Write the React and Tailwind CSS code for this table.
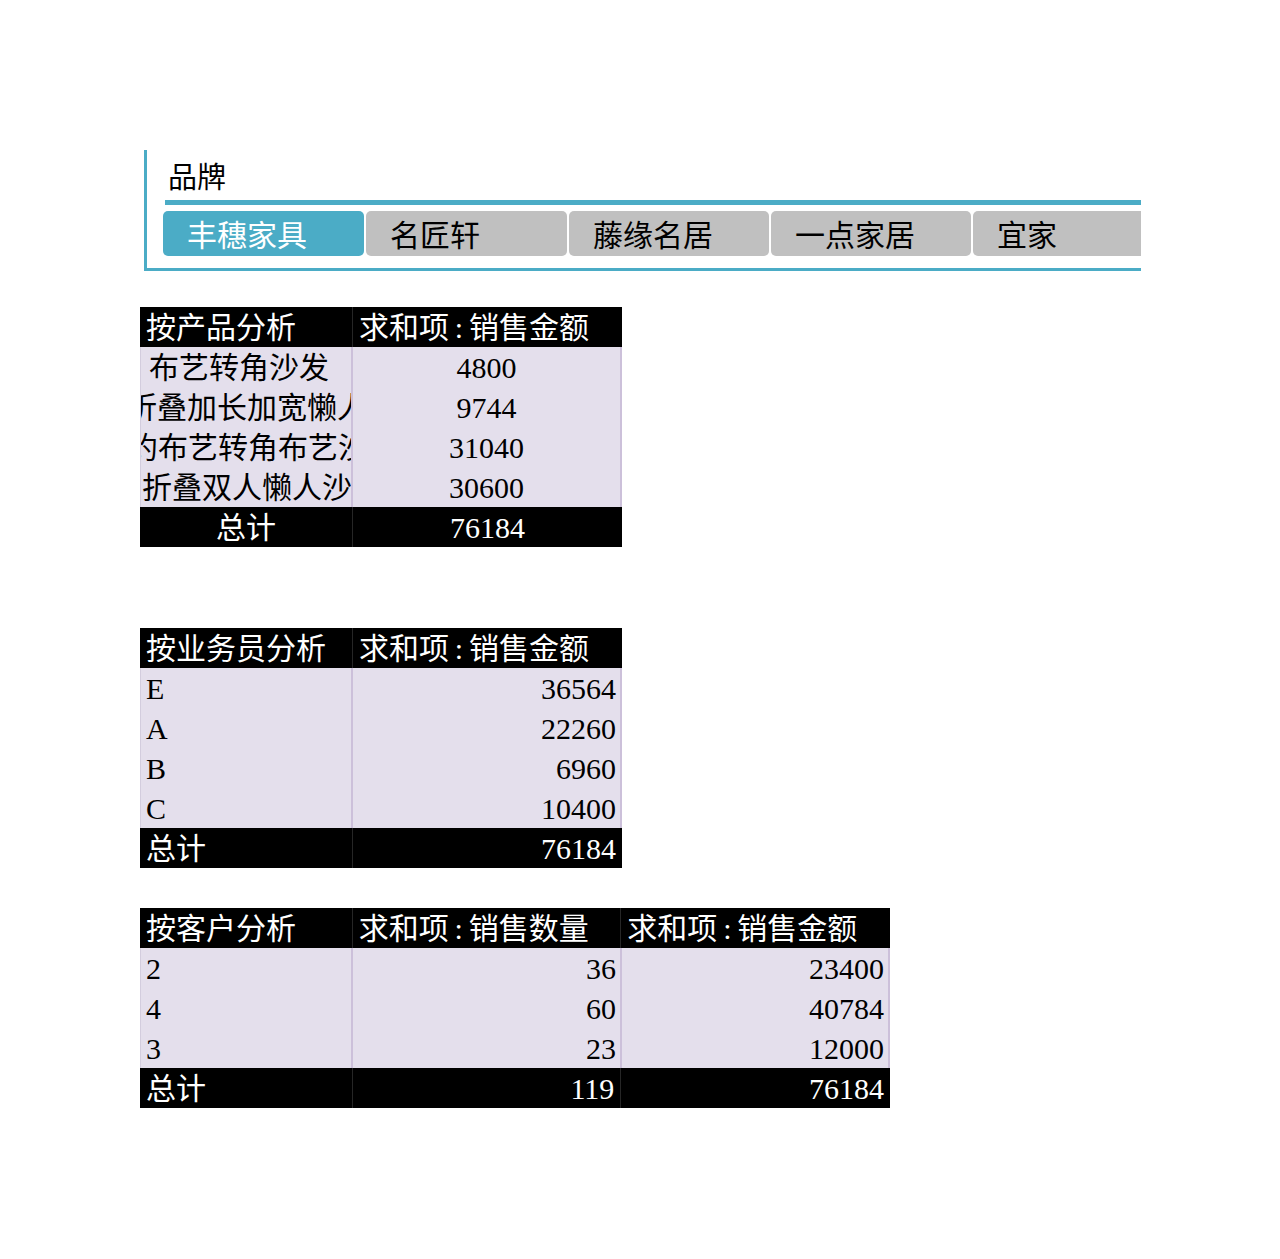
import React from 'react';

const font = { fontFamily: "'Liberation Serif', 'Noto Sans CJK SC', serif" };

const brands = [
    { name: '丰穗家具', active: true, w: 'w-[201px]' },
    { name: '名匠轩', active: false, w: 'w-[201px]' },
    { name: '藤缘名居', active: false, w: 'w-[200px]' },
    { name: '一点家居', active: false, w: 'w-[200px]' },
    { name: '宜家', active: false, w: 'w-[201px]' },
];

const products = [
    { name: '布艺转角沙发', shift: 'ml-[8px]', value: 4800 },
    { name: '折叠加长加宽懒人沙发', shift: 'ml-[-14px]', value: 9744 },
    { name: '简约布艺转角布艺沙发', shift: 'ml-[-43px]', value: 31040 },
    { name: '折叠双人懒人沙发', shift: 'ml-[1px]', value: 30600 },
];

const sellers = [
    { name: 'E', value: 36564 },
    { name: 'A', value: 22260 },
    { name: 'B', value: 6960 },
    { name: 'C', value: 10400 },
];

const customers = [
    { name: '2', qty: 36, value: 23400 },
    { name: '4', qty: 60, value: 40784 },
    { name: '3', qty: 23, value: 12000 },
];

// 求和项:xxx — the colon is wider in the sheet's font
const SumLabel = ({ field }) => (
    <>
        求和项<span className="inline-block w-[20px] text-center">:</span>{field}
    </>
);

const Slicer = () => (
    <div className="ml-[4px] w-[997px] h-[121px] border-l-[3px] border-b-[3px] border-[#4bacc6] flex flex-col">
        <div className="mt-[13px] ml-[21px] h-[30px] leading-[30px] text-[29px] text-black">品牌</div>
        <div className="mt-[7px] ml-[18px] h-[5px] bg-[#4bacc6]" />
        <div className="mt-[6px] ml-[16px] flex gap-[2px] overflow-hidden">
            {brands.map((b) => (
                <div
                    key={b.name}
                    className={`${b.w} shrink-0 h-[45px] rounded-[5px] pl-[24px] pt-[4px] flex items-center text-[30px] whitespace-nowrap ${b.active ? 'bg-[#4bacc6] text-white' : 'bg-[#c0c0c0] text-black'}`}
                >
                    {b.name}
                </div>
            ))}
        </div>
    </div>
);

const HeaderRow = ({ cells }) => (
    <div className="flex h-[40px] bg-black text-white text-[30px] leading-[42px]">
        {cells.map((c, i) => (
            <div
                key={i}
                className={`${i === 0 ? 'w-[213px]' : 'w-[269px]'} ${i < cells.length - 1 ? 'border-r border-[#262626]' : ''} pl-[6px] whitespace-nowrap overflow-hidden`}
            >
                {c}
            </div>
        ))}
    </div>
);

const TotalRow = ({ cells, align }) => (
    <div className="flex h-[40px] bg-black text-white text-[30px] leading-[42px]">
        {cells.map((c, i) => (
            <div
                key={i}
                className={`${i === 0 ? 'w-[213px]' : 'w-[269px]'} ${i < cells.length - 1 ? 'border-r border-[#262626]' : ''} ${align === 'center' ? 'text-center' : i === 0 ? 'pl-[6px]' : 'text-right pr-[6px]'} whitespace-nowrap overflow-hidden`}
            >
                {c}
            </div>
        ))}
    </div>
);

const DataBody = ({ children }) => (
    <div className="bg-[#e4dfec] border-l border-[#d3cdde] border-r-2 border-r-[#ccc0da] text-[30px] leading-[42px] text-black">
        {children}
    </div>
);

export default function App() {
    return (
        <div className="min-h-[1259px] bg-white pt-[150px] pl-[140px]" style={font}>
            <Slicer />

            {/* 按产品分析 */}
            <div className="mt-[36px] w-[482px]">
                <HeaderRow cells={['按产品分析', <SumLabel field="销售金额" />]} />
                <DataBody>
                    {products.map((p) => (
                        <div key={p.name} className="flex h-[40px]">
                            <div className="w-[212px] border-r-2 border-[#ccc0da] overflow-hidden whitespace-nowrap">
                                <span className={`inline-block ${p.shift}`}>{p.name}</span>
                            </div>
                            <div className="flex-1 text-center">{p.value}</div>
                        </div>
                    ))}
                </DataBody>
                <TotalRow cells={['总计', '76184']} align="center" />
            </div>

            {/* 按业务员分析 */}
            <div className="mt-[81px] w-[482px]">
                <HeaderRow cells={['按业务员分析', <SumLabel field="销售金额" />]} />
                <DataBody>
                    {sellers.map((s) => (
                        <div key={s.name} className="flex h-[40px]">
                            <div className="w-[212px] border-r-2 border-[#ccc0da] pl-[5px]">{s.name}</div>
                            <div className="flex-1 text-right pr-[4px]">{s.value}</div>
                        </div>
                    ))}
                </DataBody>
                <TotalRow cells={['总计', '76184']} />
            </div>

            {/* 按客户分析 */}
            <div className="mt-[40px] w-[750px]">
                <HeaderRow cells={['按客户分析', <SumLabel field="销售数量" />, <SumLabel field="销售金额" />]} />
                <DataBody>
                    {customers.map((c) => (
                        <div key={c.name} className="flex h-[40px]">
                            <div className="w-[212px] border-r-2 border-[#ccc0da] pl-[5px]">{c.name}</div>
                            <div className="w-[269px] border-r-2 border-[#ccc0da] text-right pr-[4px]">{c.qty}</div>
                            <div className="flex-1 text-right pr-[4px]">{c.value}</div>
                        </div>
                    ))}
                </DataBody>
                <TotalRow cells={['总计', '119', '76184']} />
            </div>
        </div>
    );
}
